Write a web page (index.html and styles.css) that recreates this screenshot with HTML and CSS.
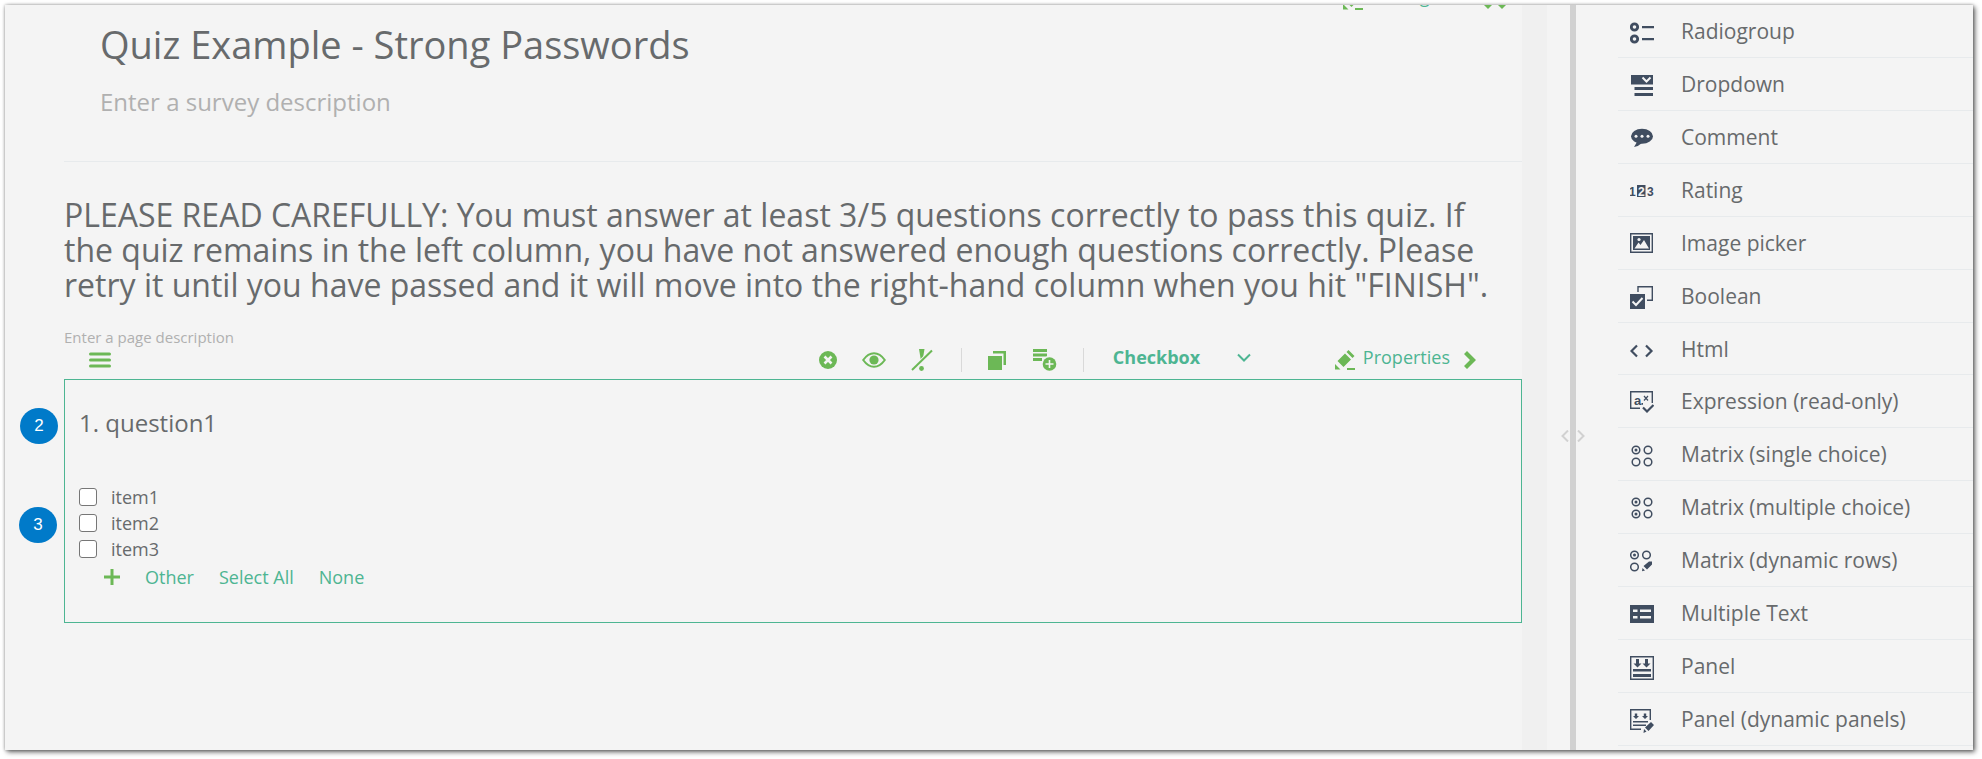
FILE: index.html
```html
<!DOCTYPE html>
<html lang="en">
<head>
    <meta charset="UTF-8">
    <meta name="viewport" content="width=device-width, initial-scale=1.0">
    <title>Quiz Example - Strong Passwords</title>
    <link rel="stylesheet" href="styles.css">
</head>
<body>
    <div class="window">
        <main class="editor">
            <a href="#" class="survey-settings">
                <svg width="20" height="20" viewBox="0 0 20 20"><path d="M10 3.500l6 6L8.500 17l-6-6zM11.500 2L13.500 0l6 6-2 2zM0 14l5.500 5.500H0zM12 18h8v2h-8z"/></svg>
                <span>Settings</span>
                <svg class="double-chevron" width="22" height="18" viewBox="0 0 22 18"><path d="M0 0h8v14l-4 4-4-4zM14 0h8v14l-4 4-4-4z"/></svg>
            </a>

            <header class="survey-header">
                <h1>Quiz Example - Strong Passwords</h1>
                <input class="survey-description" type="text" placeholder="Enter a survey description" aria-label="Survey description">
            </header>

            <h2>PLEASE READ CAREFULLY: You must answer at least 3/5 questions correctly to pass this quiz. If the quiz remains in the left column, you have not answered enough questions correctly. Please retry it until you have passed and it will move into the right-hand column when you hit "FINISH".</h2>
            <input class="page-description" type="text" placeholder="Enter a page description" aria-label="Page description">

            <!-- Question toolbar -->
            <div class="toolbar">
                <button class="tool drag" aria-label="Move question">
                    <svg width="22" height="16" viewBox="0 0 22 16"><path d="M1.500 2h19M1.500 8h19M1.500 14h19" fill="none" stroke="#6cb856" stroke-width="3" stroke-linecap="round"/></svg>
                </button>
                <div class="tool-group">
                    <button class="tool" aria-label="Delete">
                        <svg width="18" height="18" viewBox="0 0 18 18"><circle cx="9" cy="9" r="9"/><path d="M5.500 5.500l7 7M12.500 5.500l-7 7" stroke="#f4f4f4" stroke-width="2.600"/></svg>
                    </button>
                    <button class="tool" aria-label="Visible">
                        <svg width="24" height="16" viewBox="0 0 24 16"><path d="M1.200 8Q6 1.200 12 1.200T22.800 8Q18 14.800 12 14.800T1.200 8z" fill="none" stroke="#6cb856" stroke-width="2"/><circle cx="12" cy="8" r="4.600"/></svg>
                    </button>
                    <button class="tool" aria-label="Required">
                        <svg width="22" height="22" viewBox="0 0 22 22"><path d="M8 0h5.500L11.500 12h-1.500z"/><path d="M1 21L21 1.500" stroke="#f4f4f4" stroke-width="4"/><path d="M1 21L21 1.500" stroke="#6cb856" stroke-width="2"/><circle cx="10.500" cy="19.500" r="2.400"/></svg>
                    </button>
                </div>
                <div class="tool-group copy-group">
                    <button class="tool" aria-label="Copy">
                        <svg width="18" height="19" viewBox="0 0 18 19"><path d="M0 5h14v14H0zM5 0h13v14h-2.500V2.500H5z"/></svg>
                    </button>
                    <button class="tool" aria-label="Add to toolbox">
                        <svg width="24" height="22" viewBox="0 0 24 22"><path d="M0 0h14v3H0zM0 4.500h14v3H0zM0 9h9v3H0z"/><circle cx="16.500" cy="15" r="8" fill="#f4f4f4"/><circle cx="16.500" cy="15" r="6.800"/><path d="M12.500 15h8M16.500 11v8" stroke="#f4f4f4" stroke-width="1.600"/></svg>
                    </button>
                </div>
                <div class="type-picker">
                    <select aria-label="Question type">
                        <option>Checkbox</option>
                        <option>Radiogroup</option>
                        <option>Dropdown</option>
                    </select>
                    <svg width="14" height="9" viewBox="0 0 14 9"><path d="M1 1.500l6 6 6-6" fill="none" stroke="#4db592" stroke-width="2"/></svg>
                </div>
                <a href="#" class="properties">
                    <svg width="20" height="20" viewBox="0 0 20 20"><path d="M10 3.500l6 6L8.500 17l-6-6zM11.500 2L13.500 0l6 6-2 2zM0 14l5.500 5.500H0zM12 18h8v2h-8z"/></svg>
                    <span>Properties</span>
                    <svg width="12" height="18" viewBox="0 0 12 18"><path d="M3 0l9 9-9 9-3-3 6-6-6-6z"/></svg>
                </a>
            </div>

            <section class="question">
                <span class="badge">2</span>
                <h3>1. question1</h3>
                <ul class="items">
                    <li><input type="checkbox" id="item1"><label for="item1">item1</label></li>
                    <li><input type="checkbox" id="item2"><label for="item2">item2</label><span class="badge">3</span></li>
                    <li><input type="checkbox" id="item3"><label for="item3">item3</label></li>
                </ul>
                <div class="item-actions">
                    <button class="tool" aria-label="Add item">
                        <svg width="16" height="16" viewBox="0 0 16 16"><path d="M6.500 0h3v6.500H16v3H9.500V16h-3V9.500H0v-3h6.500z"/></svg>
                    </button>
                    <a href="#">Other</a>
                    <a href="#">Select All</a>
                    <a href="#">None</a>
                </div>
            </section>
        </main>
        <div class="gutter"></div>

        <div class="splitter">
            <svg width="24" height="12" viewBox="0 0 24 12"><path d="M7 .5L1.500 6 7 11.500M17 .5L22.500 6 17 11.500" fill="none" stroke="#d1d1d1" stroke-width="2"/></svg>
        </div>

        <!-- Toolbox with question types -->
        <nav class="toolbox">
            <a href="#">
                <svg viewBox="0 0 24 24"><g fill="none" stroke="#404d60" stroke-width="2.800"><circle cx="4.500" cy="6" r="3.200"/><circle cx="4.500" cy="18" r="3.200"/></g><path d="M12 5h12v2.200H12zM12 17h12v2.200H12z"/></svg>
                <span>Radiogroup</span>
            </a>
            <a href="#">
                <svg viewBox="0 0 24 24"><path d="M1 1h22v9.500H1zM4.500 13H23v3H4.500zM4.500 19H23v3H4.500z"/><path d="M12.500 3.500l4 4 4-4" fill="none" stroke="#f4f4f4" stroke-width="2"/></svg>
                <span>Dropdown</span>
            </a>
            <a href="#">
                <svg viewBox="0 0 24 24"><ellipse cx="12" cy="9.300" rx="11" ry="7.500"/><path d="M7 15l-3 5q5-1 8-4z"/><g fill="#f4f4f4"><circle cx="6" cy="9.300" r="1.500"/><circle cx="12" cy="9.300" r="1.500"/><circle cx="18" cy="9.300" r="1.500"/></g></svg>
                <span>Comment</span>
            </a>
            <a href="#">
                <svg viewBox="0 0 24 24"><path d="M7 5h8.500v12H7z"/><text x="-1" y="16" class="digit">1</text><text x="8" y="16" class="digit light">2</text><text x="17" y="16" class="digit">3</text></svg>
                <span>Rating</span>
            </a>
            <a href="#">
                <svg viewBox="0 0 24 24"><path d="M.7.700h21.600v18.600H.7z" fill="none" stroke="#404d60" stroke-width="1.400"/><path d="M3 3h17v14H3z"/><path d="M4.500 15.500l4-6 2 2.500 3.500-5 5 8.500z" fill="#f4f4f4"/><circle cx="9" cy="6.500" r="1.600" fill="#f4f4f4"/></svg>
                <span>Image picker</span>
            </a>
            <a href="#">
                <svg viewBox="0 0 24 24"><path d="M8 6V.7h14.300v13.600H17" fill="none" stroke="#404d60" stroke-width="1.400"/><path d="M0 8h15v15H0z"/><path d="M2.500 15.500l3.500 3.500 6.500-7" fill="none" stroke="#f4f4f4" stroke-width="2"/></svg>
                <span>Boolean</span>
            </a>
            <a href="#">
                <svg viewBox="0 0 24 24"><path d="M7 6.500L1.500 12 7 17.500M16 6.500l5.500 5.500-5.500 5.500" fill="none" stroke="#404d60" stroke-width="2.200"/></svg>
                <span>Html</span>
            </a>
            <a href="#">
                <svg viewBox="0 0 24 24"><path d="M10 17.300H.7V.7h21.600V12" fill="none" stroke="#404d60" stroke-width="1.400"/><path d="M13 16.500l4 4 6.500-6.500" fill="none" stroke="#404d60" stroke-width="2.200"/><text x="4" y="14" class="letter">a</text><path d="M11.500 12H13v1.800h-1.500z"/><path d="M14 5l4 4.500M18 5l-4 4.500" stroke="#404d60" stroke-width="1.200"/></svg>
                <span>Expression (read-only)</span>
            </a>
            <a href="#">
                <svg viewBox="0 0 24 24"><g fill="none" stroke="#404d60" stroke-width="1.500"><circle cx="6" cy="6" r="3.800"/><circle cx="18" cy="6" r="3.800"/><circle cx="6" cy="18" r="3.800"/><circle cx="18" cy="18" r="3.800"/></g><circle cx="6" cy="6" r="1.500"/></svg>
                <span>Matrix (single choice)</span>
            </a>
            <a href="#">
                <svg viewBox="0 0 24 24"><g fill="none" stroke="#404d60" stroke-width="1.500"><circle cx="6" cy="5" r="3.800"/><circle cx="18" cy="5" r="3.800"/><circle cx="6" cy="17" r="3.800"/><circle cx="18" cy="17" r="3.800"/></g><circle cx="6" cy="5" r="1.500"/><circle cx="6" cy="17" r="1.500"/></svg>
                <span>Matrix (multiple choice)</span>
            </a>
            <a href="#">
                <svg viewBox="0 0 24 24"><g fill="none" stroke="#404d60" stroke-width="1.500"><circle cx="4.500" cy="5" r="3.800"/><circle cx="16.500" cy="5" r="3.800"/><circle cx="4.500" cy="17" r="3.800"/></g><circle cx="4.500" cy="5" r="1.500"/><path d="M19 11.500l3 0v3l-5 5-3.500-3.500zM12.500 18l2.500 2.500-3 .8z"/></svg>
                <span>Matrix (dynamic rows)</span>
            </a>
            <a href="#">
                <svg viewBox="0 0 24 24"><path d="M0 2h24v18H0z"/><path d="M3 6.500h4.500V9H3zM10 6.500h11V9H10zM3 13h4.500v2.500H3zM10 13h11v2.500H10z" fill="#f4f4f4"/></svg>
                <span>Multiple Text</span>
            </a>
            <a href="#">
                <svg viewBox="0 0 24 24"><path d="M.7.700h22.600v22.600H.7z" fill="none" stroke="#404d60" stroke-width="1.400"/><path d="M6 3h3v4.500h2.500l-4 4-4-4H6zM15 3h3v4.500h2.500l-4 4-4-4H15zM3 13h18v2.500H3zM3 18h18v3H3z"/></svg>
                <span>Panel</span>
            </a>
            <a href="#">
                <svg viewBox="0 0 24 24"><path d="M11 20.300H.7V.7h19.600V11" fill="none" stroke="#404d60" stroke-width="1.400"/><path d="M4.800 4.500h2.400V7h1.800l-3 3-3-3h1.800zM13.800 4.500h2.400V7H18l-3 3-3-3h1.800zM3 12h15v1.500H3zM3 15.500h13V17H3z"/><path d="M21 13l3 3-5.500 6-3.500-3.500zM14 20l2.500 2.500-3 1.500z"/></svg>
                <span>Panel (dynamic panels)</span>
            </a>
        </nav>
    </div>
</body>
</html>
```
FILE: styles.css
```css
* {
    box-sizing: border-box;
}
body {
    margin: 0;
    padding: 5px 9px 9px 5px;
    min-height: 100vh;
    display: flex;
    background-color: #fff;
    font-family: 'Open Sans', sans-serif;
    font-size: 18px;
    line-height: 26px;
    color: #676a6c;
}
a {
    color: #4db592;
    text-decoration: none;
}
h1, h2, h3 {
    margin: 0;
    font-weight: 400;
}
svg {
    display: block;
    flex: none;
    fill: #6cb856;
}
input[type="text"] {
    display: block;
    width: 100%;
    padding: 0;
    border: none;
    background: none;
    font-family: inherit;
    color: inherit;
}
input::placeholder {
    color: #b0b0b0;
    opacity: 1;
}
.window {
    flex: 1;
    display: flex;
    background-color: #f4f4f4;
    box-shadow: 0 0 3px rgba(0, 0, 0, 0.3), 2px 2px 5px rgba(0, 0, 0, 0.6);
}

/* Editor */
.editor {
    position: relative;
    flex: 1;
    min-width: 0;
    padding-left: 59px;
    overflow: hidden;
}
.gutter {
    width: 25px;
    background-color: #f0f0f0;
}
.survey-settings {
    position: absolute;
    top: -22px;
    right: 16px;
    display: flex;
    align-items: center;
    gap: 8px;
}
.survey-settings span {
    margin-bottom: 8px;
}
.double-chevron {
    margin-left: 38px;
}
.survey-header {
    padding: 13px 36px 43px;
    border-bottom: 1px solid #e7eaec;
}
h1 {
    font-size: 38px;
    line-height: 52px;
    margin-bottom: 15px;
}
.survey-description {
    height: 33px;
    font-size: 24px;
}
h2 {
    margin: 35px 0 24px;
    padding-right: 24px;
    font-size: 32px;
    line-height: 35px;
}
.page-description {
    height: 22px;
    font-size: 15px;
}

/* Toolbar */
.toolbar {
    display: flex;
    align-items: center;
    height: 31px;
    padding: 0 46px 7px 25px;
}
.tool {
    padding: 0;
    border: none;
    background: none;
    cursor: pointer;
}
.drag {
    margin-right: auto;
}
.tool-group {
    display: flex;
    align-items: center;
    gap: 25px;
    height: 24px;
    padding-right: 28px;
    border-right: 1px solid #d9d9d9;
}
.copy-group {
    gap: 27px;
    padding-left: 26px;
    padding-right: 26px;
}
.type-picker {
    display: flex;
    align-items: center;
    width: 138px;
    margin: 0 84px 6px 29px;
}
.type-picker select {
    flex: 1;
    margin-right: -14px;
    padding: 0;
    border: none;
    background: none;
    appearance: none;
    font: bold 18px 'Open Sans', sans-serif;
    color: #4db592;
}
.type-picker svg {
    pointer-events: none;
}
.properties {
    display: flex;
    align-items: center;
    gap: 8px;
}
.properties span {
    margin: 0 6px 6px 0;
}

/* Question */
.question {
    position: relative;
    padding: 26px 14px 32px;
    border: 1px solid #4db592;
}
h3 {
    font-size: 24px;
    line-height: 33px;
}
.items {
    list-style: none;
    margin: 45px 0 2px;
    padding: 0;
}
.items li {
    position: relative;
    display: flex;
    align-items: center;
}
.items input {
    appearance: none;
    width: 18px;
    height: 18px;
    margin: 0 14px 0 0;
    border: 1px solid #767676;
    border-radius: 3px;
    background-color: #fff;
}
.item-actions {
    display: flex;
    align-items: center;
    gap: 25px;
    padding-left: 25px;
}
.badge {
    position: absolute;
    left: -45px;
    top: 28px;
    width: 38px;
    height: 36px;
    border-radius: 50%;
    background-color: #007ac9;
    color: #fff;
    font: 17px/36px 'Liberation Sans', sans-serif;
    text-align: center;
}
.items .badge {
    left: -60px;
    top: -3px;
}

/* Splitter */
.splitter {
    display: flex;
    align-items: center;
    justify-content: center;
    width: 6px;
    margin-left: 23px;
    background-color: #d1d1d1;
}
.splitter svg {
    margin-top: 117px;
}

/* Toolbox */
.toolbox {
    width: 397px;
    padding: 0 0 4px 42px;
    display: grid;
    grid-auto-rows: 1fr;
}
.toolbox a {
    display: flex;
    align-items: center;
    gap: 27px;
    padding: 0 12px;
    border-bottom: 1px solid #e7eaec;
    font-size: 21px;
    color: #676a6c;
}
.toolbox svg {
    width: 24px;
    height: 24px;
    margin-top: 4px;
    fill: #404d60;
}
.digit {
    font: bold 12px 'Liberation Sans', sans-serif;
}
.light {
    fill: #f4f4f4;
}
.letter {
    font: bold 13px 'Liberation Sans', sans-serif;
}
```
